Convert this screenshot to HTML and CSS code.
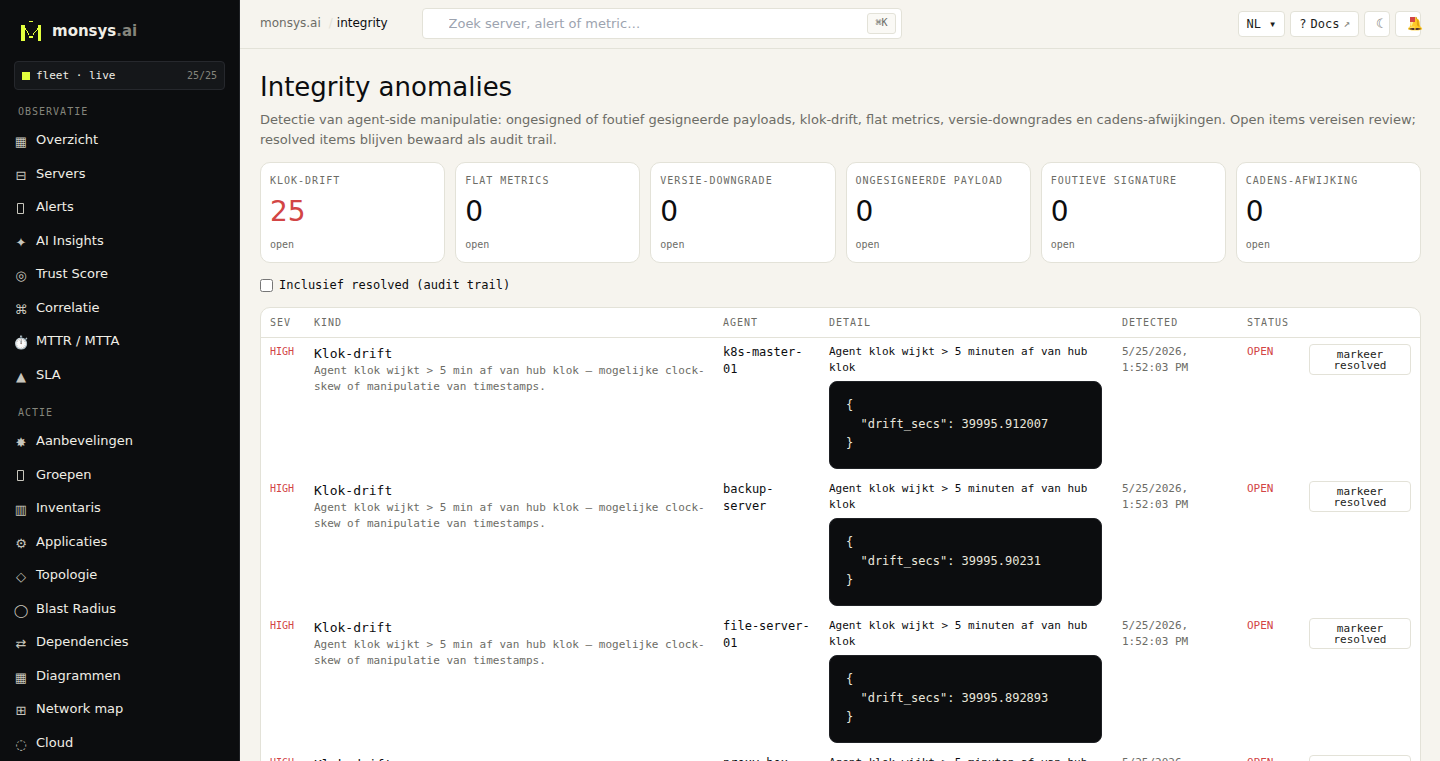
FILE: index.html
```
<!DOCTYPE html>
<html lang="nl">
<head>
    <meta charset="UTF-8">
    <meta name="viewport" content="width=device-width, initial-scale=1.0">
    <title>Integrity anomalies - monsys.ai</title>
    <link rel="stylesheet" href="styles.css">
</head>
<body>

    <aside class="sidebar">
        <a class="brand" href="#">
            <svg class="brand-logo" width="24" height="24" viewBox="0 0 24 24" shape-rendering="crispEdges" aria-hidden="true">
                <path fill="#e2ff3d" d="M2 6h4v16H2zM19 6h3v16h-3zM10 2h4v1h-4zM10 17h4v2h-4z"/>
                <path fill="#e2ff3d" d="M6 9h1v2h-1zM7 11h1v1h-1zM8 12h1v2h-1zM9 14h1v2h-1zM18 9h1v2h-1zM17 11h1v1h-1zM16 12h1v1h-1zM15 13h1v1h-1zM14 14h1v2h-1z"/>
            </svg>
            <span class="brand-name">monsys<span class="brand-tld">.ai</span></span>
        </a>

        <div class="fleet">
            <span class="fleet-dot"></span>
            <span class="fleet-label">fleet · live</span>
            <span class="fleet-count">25/25</span>
        </div>

        <nav>
            <h2 class="nav-title">Observatie</h2>
            <a class="nav-item" href="#"><span class="nav-icon">▦</span>Overzicht</a>
            <a class="nav-item" href="#"><span class="nav-icon">⊟</span>Servers</a>
            <a class="nav-item" href="#"><span class="nav-icon"><svg width="10" height="12" viewBox="0 0 10 12" aria-hidden="true"><path fill="none" stroke="currentColor" d="M1.5 .5h6v10h-6z"/></svg></span>Alerts</a>
            <a class="nav-item" href="#"><span class="nav-icon">✦</span>AI Insights</a>
            <a class="nav-item" href="#"><span class="nav-icon">◎</span>Trust Score</a>
            <a class="nav-item" href="#"><span class="nav-icon">⌘</span>Correlatie</a>
            <a class="nav-item" href="#"><span class="nav-icon">⏱️</span>MTTR / MTTA</a>
            <a class="nav-item" href="#"><span class="nav-icon">▲</span>SLA</a>

            <h2 class="nav-title">Actie</h2>
            <a class="nav-item" href="#"><span class="nav-icon">✸</span>Aanbevelingen</a>
            <a class="nav-item" href="#"><span class="nav-icon"><svg width="10" height="12" viewBox="0 0 10 12" aria-hidden="true"><path fill="none" stroke="currentColor" d="M1.5 .5h6v10h-6z"/></svg></span>Groepen</a>
            <a class="nav-item" href="#"><span class="nav-icon">▥</span>Inventaris</a>
            <a class="nav-item" href="#"><span class="nav-icon">⚙</span>Applicaties</a>
            <a class="nav-item" href="#"><span class="nav-icon">◇</span>Topologie</a>
            <a class="nav-item" href="#"><span class="nav-icon">◯</span>Blast Radius</a>
            <a class="nav-item" href="#"><span class="nav-icon">⇄</span>Dependencies</a>
            <a class="nav-item" href="#"><span class="nav-icon">▦</span>Diagrammen</a>
            <a class="nav-item" href="#"><span class="nav-icon">⊞</span>Network map</a>
            <a class="nav-item" href="#"><span class="nav-icon">◌</span>Cloud</a>
        </nav>
    </aside>

    <div class="main">
        <header class="topbar">
            <div class="crumbs">
                <a href="#">monsys.ai</a>
                <span class="crumb-sep">/</span>
                <span class="crumb-current">integrity</span>
            </div>
            <div class="search">
                <input type="text" placeholder="Zoek server, alert of metric…" aria-label="Zoeken">
                <kbd>⌘K</kbd>
            </div>
            <div class="actions">
                <button class="btn btn-lang">NL <span class="caret">▾</span></button>
                <a class="btn" href="#"><span>?</span><span>Docs</span><span class="ext">↗</span></a>
                <button class="btn btn-icon" aria-label="Thema">☾</button>
                <button class="btn btn-icon btn-bell" aria-label="Meldingen">🔔<span class="badge"></span></button>
            </div>
        </header>

        <main class="content">
            <h1>Integrity anomalies</h1>
            <p class="lead">Detectie van agent-side manipulatie: ongesigned of foutief gesigneerde payloads, klok-drift, flat metrics, versie-downgrades en cadens-afwijkingen. Open items vereisen review; resolved items blijven bewaard als audit trail.</p>

            <div class="stats">
                <div class="card">
                    <div class="card-label">Klok-drift</div>
                    <div class="card-value bad">25</div>
                    <div class="card-sub">open</div>
                </div>
                <div class="card">
                    <div class="card-label">Flat metrics</div>
                    <div class="card-value">0</div>
                    <div class="card-sub">open</div>
                </div>
                <div class="card">
                    <div class="card-label">Versie-downgrade</div>
                    <div class="card-value">0</div>
                    <div class="card-sub">open</div>
                </div>
                <div class="card">
                    <div class="card-label">Ongesigneerde payload</div>
                    <div class="card-value">0</div>
                    <div class="card-sub">open</div>
                </div>
                <div class="card">
                    <div class="card-label">Foutieve signature</div>
                    <div class="card-value">0</div>
                    <div class="card-sub">open</div>
                </div>
                <div class="card">
                    <div class="card-label">Cadens-afwijking</div>
                    <div class="card-value">0</div>
                    <div class="card-sub">open</div>
                </div>
            </div>

            <label class="filter"><input type="checkbox"> Inclusief resolved (audit trail)</label>

            <div class="panel">
                <table>
                    <thead>
                        <tr>
                            <th class="col-sev">Sev</th>
                            <th class="col-kind">Kind</th>
                            <th class="col-agent">Agent</th>
                            <th class="col-detail">Detail</th>
                            <th class="col-detected">Detected</th>
                            <th class="col-status">Status</th>
                            <th class="col-action"></th>
                        </tr>
                    </thead>
                    <tbody>
                        <tr>
                            <td class="sev">HIGH</td>
                            <td><div class="kind">Klok-drift</div><div class="kind-desc">Agent klok wijkt &gt; 5 min af van hub klok — mogelijke clock-skew of manipulatie van timestamps.</div></td>
                            <td class="agent">k8s-master-01</td>
                            <td class="detail">Agent klok wijkt &gt; 5 minuten af van hub klok
<pre>{
  "drift_secs": 39995.912007
}</pre></td>
                            <td class="detected">5/25/2026, 1:52:03 PM</td>
                            <td class="status">OPEN</td>
                            <td><button class="resolve">markeer resolved</button></td>
                        </tr>
                        <tr>
                            <td class="sev">HIGH</td>
                            <td><div class="kind">Klok-drift</div><div class="kind-desc">Agent klok wijkt &gt; 5 min af van hub klok — mogelijke clock-skew of manipulatie van timestamps.</div></td>
                            <td class="agent">backup-server</td>
                            <td class="detail">Agent klok wijkt &gt; 5 minuten af van hub klok
<pre>{
  "drift_secs": 39995.90231
}</pre></td>
                            <td class="detected">5/25/2026, 1:52:03 PM</td>
                            <td class="status">OPEN</td>
                            <td><button class="resolve">markeer resolved</button></td>
                        </tr>
                        <tr>
                            <td class="sev">HIGH</td>
                            <td><div class="kind">Klok-drift</div><div class="kind-desc">Agent klok wijkt &gt; 5 min af van hub klok — mogelijke clock-skew of manipulatie van timestamps.</div></td>
                            <td class="agent">file-server-01</td>
                            <td class="detail">Agent klok wijkt &gt; 5 minuten af van hub klok
<pre>{
  "drift_secs": 39995.892893
}</pre></td>
                            <td class="detected">5/25/2026, 1:52:03 PM</td>
                            <td class="status">OPEN</td>
                            <td><button class="resolve">markeer resolved</button></td>
                        </tr>
                        <tr>
                            <td class="sev">HIGH</td>
                            <td><div class="kind">Klok-drift</div><div class="kind-desc">Agent klok wijkt &gt; 5 min af van hub klok — mogelijke clock-skew of manipulatie van timestamps.</div></td>
                            <td class="agent">proxy-box</td>
                            <td class="detail">Agent klok wijkt &gt; 5 minuten af van hub klok
<pre>{
  "drift_secs": 39995.88417
}</pre></td>
                            <td class="detected">5/25/2026, 1:52:03 PM</td>
                            <td class="status">OPEN</td>
                            <td><button class="resolve">markeer resolved</button></td>
                        </tr>
                    </tbody>
                </table>
            </div>
        </main>
    </div>

</body>
</html>
```
FILE: styles.css
```
:root {
    --sans: "DejaVu Sans", sans-serif;
    --mono: "DejaVu Sans Mono", monospace;
    --ink: #0c0d0f;
    --muted: #6c6c66;
    --line: #e3e2d8;
    --paper: #f6f4ee;
    --red: #d24545;
    --lime: #e2ff3d;
}
* {
    box-sizing: border-box;
}
body {
    margin: 0;
    height: 100vh;
    display: flex;
    overflow: hidden;
    font-family: var(--sans);
    font-size: 13px;
    color: var(--ink);
    background: var(--paper);
}
a {
    color: inherit;
    text-decoration: none;
}
button {
    cursor: pointer;
}

/* sidebar */
.sidebar {
    width: 240px;
    flex-shrink: 0;
    overflow: hidden;
    padding: 18px 14px;
    background: var(--ink);
    border-right: 1px solid #1f2125;
    color: #f0eee6;
}
.brand {
    display: flex;
    align-items: center;
    gap: 9px;
    padding: 0 5px;
    height: 25px;
    margin-bottom: 18px;
}
.brand-name {
    font-size: 15px;
    font-weight: bold;
}
.brand-tld {
    color: #85857c;
}
.fleet {
    display: flex;
    align-items: center;
    gap: 6px;
    height: 29px;
    padding: 0 7px;
    border: 1px solid #26282d;
    border-radius: 4px;
    background: #15171a;
    font-family: var(--mono);
    font-size: 11px;
}
.fleet-dot {
    width: 8px;
    height: 8px;
    background: var(--lime);
}
.fleet-count {
    margin-left: auto;
    font-size: 10px;
    color: #85857c;
}
.nav-title {
    margin: 0;
    padding: 14px 4px 4px;
    font-family: var(--mono);
    font-size: 10px;
    font-weight: normal;
    line-height: 15px;
    letter-spacing: 1px;
    text-transform: uppercase;
    color: #85857c;
}
.nav-item {
    display: flex;
    gap: 8px;
    padding: 7px 0;
    line-height: 1.5;
}
.nav-icon {
    display: flex;
    justify-content: center;
    align-items: center;
    width: 14px;
    padding-top: 4px;
    font-size: 13px;
    line-height: 15px;
    color: #c8c6bd;
}

/* top bar */
.main {
    flex: 1;
    min-width: 0;
    overflow: hidden;
}
.topbar {
    display: flex;
    align-items: center;
    height: 49px;
    padding: 0 19px 1px 20px;
    border-bottom: 1px solid var(--line);
}
.crumbs {
    display: flex;
    gap: 4px;
    margin-right: 34px;
    padding-bottom: 2px;
    color: var(--muted);
    font-size: 12px;
}
.crumb-sep {
    padding-left: 4px;
    color: var(--line);
}
.crumb-current {
    color: var(--ink);
}
.search {
    display: flex;
    align-items: center;
    width: 480px;
    height: 31px;
    padding-right: 5px;
    border: 1px solid var(--line);
    border-radius: 4px;
    background: #fff;
}
.search input {
    flex: 1;
    padding: 0 0 0 26px;
    border: 0;
    outline: 0;
    background: none;
    font-family: var(--sans);
    font-size: 13px;
}
.search input::placeholder {
    color: #9ca3af;
}
kbd {
    padding: 2px 7px 4px;
    border: 1px solid var(--line);
    border-radius: 3px;
    background: #faf9f5;
    font-family: var(--mono);
    font-size: 10px;
    line-height: 13px;
    color: var(--muted);
}
.actions {
    display: flex;
    gap: 5px;
    margin-left: auto;
}
.btn {
    display: flex;
    align-items: center;
    gap: 4px;
    height: 26px;
    padding: 0 8px;
    border: 1px solid var(--line);
    border-radius: 4px;
    background: #fff;
    font-family: var(--mono);
    font-size: 12px;
    color: #1c1d20;
}
.btn-lang {
    gap: 8px;
}
.ext {
    font-size: 11px;
    color: #85857c;
}
.btn-icon {
    position: relative;
    width: 26px;
    padding: 0 0 0 11px;
    font-size: 13px;
    color: var(--muted);
}
.badge {
    position: absolute;
    top: 5px;
    right: 5px;
    width: 5px;
    height: 5px;
    background: var(--red);
}

/* page */
.content {
    padding: 21px 19px 20px 20px;
}
h1 {
    margin: 0 0 6px;
    font-size: 26px;
    font-weight: normal;
    line-height: 34px;
}
.lead {
    margin: 0 0 12px;
    line-height: 20px;
    color: var(--muted);
}
.stats {
    display: grid;
    grid-template-columns: repeat(6, 1fr);
    gap: 10px;
    margin-bottom: 14px;
}
.card {
    padding: 10px 9px 9px;
    border: 1px solid var(--line);
    border-radius: 10px;
    background: #fff;
}
.card-label {
    font-family: var(--mono);
    font-size: 10px;
    line-height: 15px;
    letter-spacing: 1px;
    text-transform: uppercase;
    white-space: nowrap;
    color: var(--muted);
}
.card-value {
    margin: 7px 0 6px;
    font-size: 28px;
    line-height: 34px;
}
.card-sub {
    padding-top: 2px;
    font-family: var(--mono);
    font-size: 10px;
    line-height: 16px;
    color: var(--muted);
}
.bad {
    color: var(--red);
}
.filter {
    display: flex;
    align-items: center;
    gap: 6px;
    margin-bottom: 13px;
    font-family: var(--mono);
    font-size: 12px;
    line-height: 17px;
}
.filter input {
    width: 13px;
    height: 13px;
    margin: 0;
}

/* anomalies table */
.panel {
    border: 1px solid var(--line);
    border-radius: 10px;
    background: #fff;
    overflow: hidden;
}
table {
    width: 100%;
    border-collapse: collapse;
    table-layout: fixed;
    font-family: var(--mono);
}
th {
    padding: 7px 9px;
    border-bottom: 1px solid var(--line);
    font-size: 10px;
    font-weight: normal;
    line-height: 15px;
    letter-spacing: 1px;
    text-align: left;
    text-transform: uppercase;
    color: var(--muted);
}
td {
    padding: 6px 9px;
    vertical-align: top;
    font-size: 11px;
    line-height: 16px;
}
.col-sev {
    width: 44px;
}
.col-agent {
    width: 106px;
}
.col-detail {
    width: 293px;
}
.col-detected {
    width: 125px;
}
.col-status {
    width: 62px;
}
.col-action {
    width: 120px;
}
td.sev {
    font-size: 10px;
    color: var(--red);
}
.kind {
    font-size: 13px;
    line-height: 19px;
}
.kind-desc {
    color: var(--muted);
}
td.agent {
    font-size: 12px;
    line-height: 17px;
}
td.detail {
    padding-right: 11px;
}
pre {
    margin: 5px 0 0;
    padding: 14px 16px 15px;
    border: 1px solid #1f2125;
    border-radius: 8px;
    background: var(--ink);
    font-family: var(--mono);
    font-size: 12px;
    line-height: 19px;
    color: #e8e6dc;
}
td.detected {
    color: var(--muted);
}
td.status {
    color: var(--red);
}
.resolve {
    width: 100%;
    padding: 4px 8px 3px;
    border: 1px solid var(--line);
    border-radius: 4px;
    background: #fff;
    font-family: var(--mono);
    font-size: 11px;
    line-height: 11px;
    color: #1c1d20;
}
```
